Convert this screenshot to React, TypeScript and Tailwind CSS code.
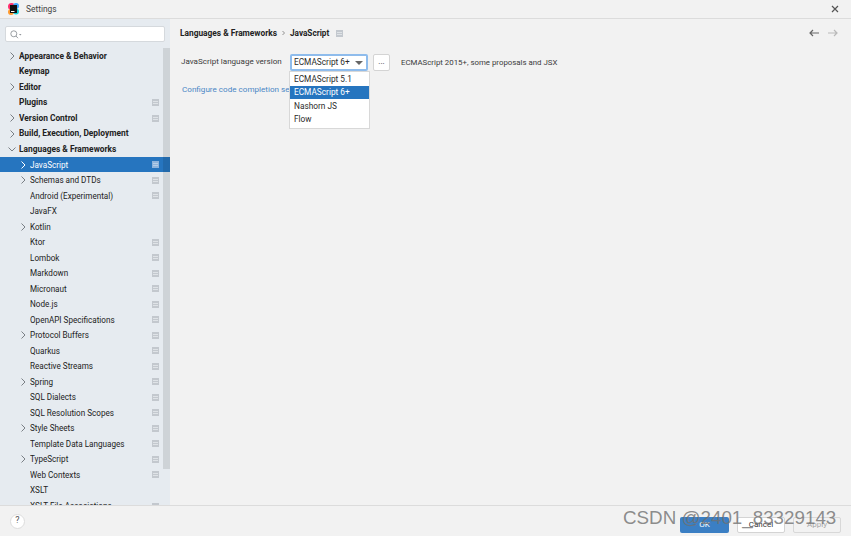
import React from "react";

type Row = { label: string; bold?: boolean; arrow?: "right" | "down"; indent?: boolean; pin?: boolean; active?: boolean };

const rows: Row[] = [
  { label: "Appearance & Behavior", bold: true, arrow: "right" },
  { label: "Keymap", bold: true },
  { label: "Editor", bold: true, arrow: "right" },
  { label: "Plugins", bold: true, pin: true },
  { label: "Version Control", bold: true, arrow: "right", pin: true },
  { label: "Build, Execution, Deployment", bold: true, arrow: "right" },
  { label: "Languages & Frameworks", bold: true, arrow: "down" },
  { label: "JavaScript", indent: true, arrow: "right", pin: true, active: true },
  { label: "Schemas and DTDs", indent: true, arrow: "right", pin: true },
  { label: "Android (Experimental)", indent: true, pin: true },
  { label: "JavaFX", indent: true },
  { label: "Kotlin", indent: true, arrow: "right" },
  { label: "Ktor", indent: true, pin: true },
  { label: "Lombok", indent: true, pin: true },
  { label: "Markdown", indent: true, pin: true },
  { label: "Micronaut", indent: true, pin: true },
  { label: "Node.js", indent: true, pin: true },
  { label: "OpenAPI Specifications", indent: true, pin: true },
  { label: "Protocol Buffers", indent: true, arrow: "right", pin: true },
  { label: "Quarkus", indent: true, pin: true },
  { label: "Reactive Streams", indent: true, pin: true },
  { label: "Spring", indent: true, arrow: "right", pin: true },
  { label: "SQL Dialects", indent: true, pin: true },
  { label: "SQL Resolution Scopes", indent: true, pin: true },
  { label: "Style Sheets", indent: true, arrow: "right", pin: true },
  { label: "Template Data Languages", indent: true, pin: true },
  { label: "TypeScript", indent: true, arrow: "right", pin: true },
  { label: "Web Contexts", indent: true, pin: true },
  { label: "XSLT", indent: true },
  { label: "XSLT File Associations", indent: true, pin: true },
];

function Chevron({ dir, light }: { dir: "right" | "down"; light?: boolean }) {
  return (
    <svg width="8" height="8" viewBox="0 0 8 8" fill="none" stroke={light ? "#ffffff" : "#7a7f85"} strokeWidth="1">
      {dir === "right" ? <path d="M2.5 0.5 L6 4 L2.5 7.5" /> : <path d="M0.5 2.5 L4 6 L7.5 2.5" />}
    </svg>
  );
}

function Pin({ light }: { light?: boolean }) {
  return (
    <svg width="7" height="7" viewBox="0 0 7 7" className="shrink-0">
      <rect x="0" y="0" width="7" height="7" fill={light ? "#8fb4dc" : "#c3c8ce"} />
      <rect x="1" y="2" width="5" height="1" fill={light ? "#b5cee8" : "#dfe3e7"} />
      <rect x="1" y="4" width="5" height="1" fill={light ? "#b5cee8" : "#dfe3e7"} />
    </svg>
  );
}

function TreeRow({ row }: { row: Row }) {
  return (
    <div
      className={`flex h-[15.52px] shrink-0 items-center ${row.active ? "bg-[#2675bf] text-white" : "text-[#222222]"} ${row.bold ? "text-[8.4px] font-bold" : "text-[8.15px]"}`}
    >
      <div className={`flex ${row.indent ? "w-[30px] pl-[19px]" : "w-[19px] pl-[8px]"} shrink-0`}>
        {row.arrow && <Chevron dir={row.arrow} light={row.active} />}
      </div>
      <span className="flex-1 truncate">{row.label}</span>
      {row.pin && (
        <div className="mr-[11px] flex">
          <Pin light={row.active} />
        </div>
      )}
    </div>
  );
}

function Logo() {
  return (
    <svg width="11" height="12" viewBox="0 0 11 12">
      <circle cx="3.5" cy="3.5" r="3.5" fill="#ff2d6e" />
      <circle cx="8" cy="3" r="3" fill="#3fa7ff" />
      <circle cx="3" cy="9" r="3" fill="#ff9a2e" />
      <circle cx="8" cy="8.5" r="3" fill="#18d0d8" />
      <rect x="2" y="2" width="7" height="8" fill="#111111" />
      <rect x="3" y="8" width="3.5" height="1" fill="#ffffff" />
    </svg>
  );
}

export default function App() {
  return (
    <div className="relative flex h-[536px] w-[851px] flex-col overflow-hidden bg-[#f2f2f2] font-['Roboto','Open_Sans',sans-serif] text-[#2b2b2b]">
      <header className="flex h-[19px] shrink-0 items-center border-b border-[#dcdcdc] pl-[8px] pr-[12px]">
        <Logo />
        <span className="ml-[7px] text-[8.4px] text-[#444444]">Settings</span>
        <svg className="ml-auto" width="8" height="8" viewBox="0 0 8 8" stroke="#555555" strokeWidth="1.2">
          <path d="M1 1 L7 7 M7 1 L1 7" />
        </svg>
      </header>

      <div className="flex min-h-0 flex-1">
        <aside className="relative flex w-[170px] shrink-0 flex-col bg-[#e6ebf0]">
          <div className="px-[5px] pt-[7px]">
            <div className="flex h-[16px] w-[160px] items-center rounded-[2px] border border-[#d5d9dd] bg-white pl-[4px]">
              <svg width="12" height="9" viewBox="0 0 12 9" fill="none" stroke="#8f9499" strokeWidth="0.9">
                <circle cx="3.8" cy="3.8" r="3" />
                <path d="M6 6 L8 8.2" />
                <path d="M9 4 H11.5 L10.25 5.5 Z" fill="#8f9499" stroke="none" />
              </svg>
            </div>
          </div>
          <div className="flex min-h-0 flex-1 pt-[6.3px]">
            <div className="flex min-w-0 flex-1 flex-col overflow-hidden">
              {rows.map((r) => (
                <TreeRow key={r.label} row={r} />
              ))}
            </div>
          </div>
          <div className="absolute right-0 top-[29px] h-[421px] w-[7px] bg-black/10" />
        </aside>

        <main className="flex min-w-0 flex-1 flex-col pl-[10px] pr-[13px] pt-[8px]">
          <div className="flex h-[12px] items-center">
            <span className="text-[8.35px] font-bold text-[#222222]">Languages &amp; Frameworks</span>
            <svg className="mx-[4px]" width="5" height="6" viewBox="0 0 5 6" fill="none" stroke="#777777" strokeWidth="0.8">
              <path d="M1.5 1 L3.5 3 L1.5 5" />
            </svg>
            <span className="text-[8.2px] font-bold text-[#222222]">JavaScript</span>
            <span className="ml-[7px] flex">
              <Pin />
            </span>
            <div className="ml-auto flex items-center gap-[9px]">
              <svg width="10" height="8" viewBox="0 0 10 8" fill="none" stroke="#666666" strokeWidth="1.2">
                <path d="M10 4 H1 M4 1 L1 4 L4 7" />
              </svg>
              <svg width="10" height="8" viewBox="0 0 10 8" fill="none" stroke="#b9b9b9" strokeWidth="1.2">
                <path d="M0 4 H9 M6 1 L9 4 L6 7" />
              </svg>
            </div>
          </div>

          <div className="mt-[15px] flex h-[17px] items-center pl-[1px] text-[8.05px]">
            <span className="w-[109px] whitespace-nowrap text-[#3a3a3a]">JavaScript language version</span>
            <div className="flex h-[17px] w-[78px] items-center justify-between rounded-[2px] border-2 border-[#8fbcec] bg-white pl-[2px] pr-[3px] text-[8.3px] text-[#2b2b2b]">
              <span>ECMAScript 6+</span>
              <svg width="8" height="4" viewBox="0 0 8 4">
                <path d="M0 0 H8 L4 4 Z" fill="#666666" />
              </svg>
            </div>
            <div className="ml-[5px] flex h-[17px] w-[17px] items-center justify-center rounded-[2px] border border-[#d4d4d4] bg-white leading-none text-[#333333]">
              ...
            </div>
            <span className="ml-[11px] text-[7.85px] text-[#3a3a3a]">ECMAScript 2015+, some proposals and JSX</span>
          </div>

          <div className="mt-[12px] pl-[2px] text-[8.1px] text-[#4a86c5]">Configure code completion settings...</div>
        </main>
      </div>

      <footer className="flex h-[31px] shrink-0 items-center border-t border-[#dcdcdc] bg-[#f2f2f2] pl-[10px] pr-[10px]">
        <div className="flex h-[15px] w-[15px] items-center justify-center rounded-full border border-[#dddddd] bg-white text-[9px] text-[#555555]">
          ?
        </div>
        <div className="ml-auto flex items-center gap-[8px] pt-[8px] text-[8px]">
          <div className="flex h-[16px] w-[49px] items-center justify-center rounded-[2px] bg-[#3b7fc4] text-white">OK</div>
          <div className="flex h-[16px] w-[48px] items-center justify-center rounded-[2px] border border-[#d4d4d4] bg-white text-[#333333]">Cancel</div>
          <div className="flex h-[16px] w-[48px] items-center justify-center rounded-[2px] border border-[#d8d8d8] bg-[#f2f2f2] text-[#a8a8a8]">Apply</div>
        </div>
      </footer>

      <div className="absolute left-[289px] top-[71px] flex w-[81px] flex-col border border-[#d8d8d8] bg-white pb-[2px] text-[8.3px] text-[#2b2b2b]">
        <div className="flex h-[13.5px] items-center pl-[4px]">ECMAScript 5.1</div>
        <div className="flex h-[13.5px] items-center bg-[#2675bf] pl-[4px] text-white">ECMAScript 6+</div>
        <div className="flex h-[13.5px] items-center pl-[4px]">Nashorn JS</div>
        <div className="flex h-[13.5px] items-center pl-[4px]">Flow</div>
      </div>

      <div className="absolute left-[623px] top-[504px] whitespace-nowrap font-['Liberation_Sans',sans-serif] text-[18.8px] text-[#707070]/80">
        CSDN @2401_83329143
      </div>
    </div>
  );
}
